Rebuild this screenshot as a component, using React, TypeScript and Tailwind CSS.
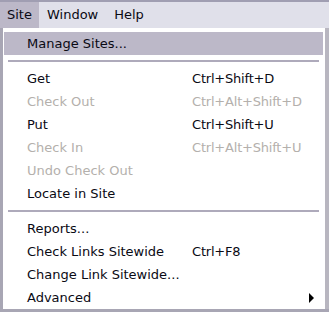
import { Fragment } from "react";

type Item = { label: string; shortcut?: string; disabled?: boolean; sub?: boolean; active?: boolean };

const groups: Item[][] = [
  [{ label: "Manage Sites...", active: true }],
  [
    { label: "Get", shortcut: "Ctrl+Shift+D" },
    { label: "Check Out", shortcut: "Ctrl+Alt+Shift+D", disabled: true },
    { label: "Put", shortcut: "Ctrl+Shift+U" },
    { label: "Check In", shortcut: "Ctrl+Alt+Shift+U", disabled: true },
    { label: "Undo Check Out", disabled: true },
    { label: "Locate in Site" },
  ],
  [
    { label: "Reports..." },
    { label: "Check Links Sitewide", shortcut: "Ctrl+F8" },
    { label: "Change Link Sitewide..." },
    { label: "Advanced", sub: true },
  ],
];

function Row({ item }: { item: Item }) {
  const color = item.disabled ? "text-[#b4b0ac]" : "text-[#0a0a14]";
  return (
    <div
      className={`flex items-center h-[23px] pl-[23px] pr-[10px] mr-[2px] ${color} ${
        item.active ? "bg-[#bcb8c8]" : ""
      }`}
    >
      <span className="w-[165px] whitespace-nowrap">{item.label}</span>
      <span className="flex-1 whitespace-nowrap tracking-[-0.2px]">{item.shortcut}</span>
      {item.sub && (
        <svg width="6" height="10" viewBox="0 0 6 10" className="-mr-[2px]">
          <path d="M0 0 L5 5 L0 10 Z" fill="#000" />
        </svg>
      )}
    </div>
  );
}

export default function App() {
  return (
    <div
      className="w-[329px] h-[312px] bg-[#a8a6b4] overflow-hidden text-[13px]"
      style={{ fontFamily: "Tahoma, 'DejaVu Sans', sans-serif" }}
    >
      <div className="h-[28px] flex items-stretch bg-[#e0e0ea] border-t-2 border-[#a09eb2]">
        <div className="bg-[#bcb8c8] px-[7px] flex items-center text-[#0a0a14]">Site</div>
        <div className="px-[8px] flex items-center text-[#0a0a14]">Window</div>
        <div className="px-[8px] flex items-center text-[#0a0a14]">Help</div>
      </div>
      <div className="flex">
        <div className="w-[325px] h-[281px] bg-white border-l-[3px] border-[#a8a6b4] pt-[4px] pl-[1px]">
          {groups.map((g, i) => (
            <Fragment key={i}>
              {i > 0 && <div className="h-[2px] bg-[#aeaabb] ml-[4px] mr-[6px] my-[5px]" />}
              {g.map((it) => (
                <Row key={it.label} item={it} />
              ))}
            </Fragment>
          ))}
        </div>
        <div className="w-[4px] h-[281px] bg-[#b8b6c0]" />
      </div>
    </div>
  );
}
